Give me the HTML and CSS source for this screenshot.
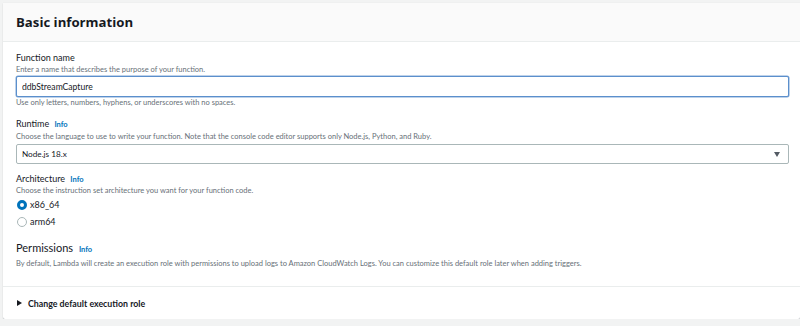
FILE: index.html
```html
<!DOCTYPE html>
<html lang="en">

<head>
    <meta charset="UTF-8">
    <meta name="viewport" content="width=device-width, initial-scale=1.0">
    <title>Basic information</title>
    <link rel="stylesheet" href="styles.css">
</head>

<body>
    <div class="card">
        <div class="card-header">
            <h2>Basic information</h2>
        </div>

        <div class="card-body">
            <div class="field">
                <label class="label" for="fn-name">Function name</label>
                <div class="desc">Enter a name that describes the purpose of your function.</div>
                <input class="text-input" id="fn-name" type="text" value="ddbStreamCapture">
                <div class="constraint">Use only letters, numbers, hyphens, or underscores with no spaces.</div>
            </div>

            <div class="field">
                <div class="label">Runtime <a class="info" href="#">Info</a></div>
                <div class="desc">Choose the language to use to write your function. Note that the console code editor supports only Node.js, Python, and Ruby.</div>
                <div class="select">
                    <span>Node.js 18.x</span>
                    <span class="caret"></span>
                </div>
            </div>

            <div class="field">
                <div class="label">Architecture <a class="info" href="#">Info</a></div>
                <div class="desc desc-tight">Choose the instruction set architecture you want for your function code.</div>
                <div class="radio-row">
                    <span class="radio checked"></span>
                    <span>x86_64</span>
                </div>
                <div class="radio-row">
                    <span class="radio"></span>
                    <span>arm64</span>
                </div>
            </div>

            <div class="permissions">
                <h3>Permissions <a class="info" href="#">Info</a></h3>
                <div class="desc">By default, Lambda will create an execution role with permissions to upload logs to Amazon CloudWatch Logs. You can customize this default role later when adding triggers.</div>
            </div>
        </div>

        <div class="expander">
            <span class="triangle"></span>
            <span>Change default execution role</span>
        </div>
    </div>
</body>

</html>
```

FILE: styles.css
```css
body {
    font-family: Lato, "Open Sans", Arial, sans-serif;
    background-color: #f2f3f3;
    margin: 0;
    padding: 3px 0 0 3px;
    color: #16191f
}

.card {
    background-color: #fff;
    box-shadow: 0 1px 1px rgba(0, 22, 43, .2), 0 0 1px rgba(0, 22, 43, .15);
    border-radius: 0 0 2px 2px
}

.card-header {
    height: 38px;
    display: flex;
    align-items: center;
    padding: 0 13px;
    background-color: #fafafa;
    border-bottom: 1px solid #eaeded
}

.card-header h2 {
    margin: 0;
    font-family: "Open Sans", Lato, sans-serif;
    font-size: 13.2px;
    font-weight: 700
}

.card-body {
    padding: 9px 11px 16px 13px;
    border-bottom: 1px solid #eaeded
}

.field {
    margin-bottom: 8px
}

.label {
    font-size: 9px;
    line-height: 13px;
    display: block
}

.info {
    color: #0073bb;
    font-weight: 700;
    font-size: 7.5px;
    text-decoration: none;
    margin-left: 3px
}

.desc {
    font-size: 7.5px;
    line-height: 12px;
    color: #687078
}

.desc-tight {
    line-height: 10px
}

.constraint {
    font-size: 7.5px;
    line-height: 12px;
    color: #687078
}

.text-input {
    display: block;
    box-sizing: border-box;
    width: 100%;
    height: 21px;
    margin: 0;
    padding: 0 5px;
    border: 1px solid #5b8fcc;
    border-radius: 2px;
    box-shadow: 0 0 0 0.5px #7ea6d6;
    font-family: inherit;
    font-size: 8.6px;
    color: #16191f;
    outline: none
}

.select {
    box-sizing: border-box;
    height: 20px;
    margin-top: 1px;
    padding: 0 8px 0 5px;
    border: 1px solid #aab7b8;
    border-radius: 2px;
    display: flex;
    align-items: center;
    justify-content: space-between;
    font-size: 8.2px
}

.caret {
    width: 0;
    height: 0;
    border-left: 3.5px solid transparent;
    border-right: 3.5px solid transparent;
    border-top: 5px solid #545b64
}

.radio-row {
    height: 17px;
    display: flex;
    align-items: center;
    font-size: 9px
}

.radio {
    box-sizing: border-box;
    width: 10px;
    height: 10px;
    border: 1px solid #aab7b8;
    border-radius: 50%;
    margin: 0 3px 0 1px
}

.radio.checked {
    border: 3px solid #0073bb
}

.permissions {
    margin-top: 10px
}

.permissions h3 {
    margin: 0;
    font-size: 11px;
    line-height: 16px;
    font-weight: 400
}

.expander {
    height: 32px;
    display: flex;
    align-items: center;
    padding-left: 14px;
    font-size: 8.8px;
    font-weight: 700;
    color: #16191f
}

.triangle {
    width: 0;
    height: 0;
    border-top: 3px solid transparent;
    border-bottom: 3px solid transparent;
    border-left: 5px solid #16191f;
    margin-right: 6px
}
```
